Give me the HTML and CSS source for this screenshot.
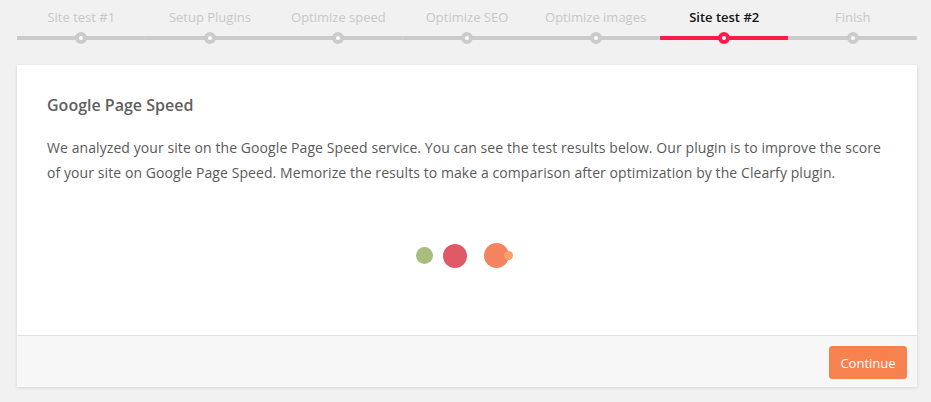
FILE: index.html
```html
<!DOCTYPE html>
<html>
<head>
<meta charset="utf-8">
<link rel="stylesheet" href="styles.css">
</head>
<body>
<div class="page">
  <ol class="steps">
    <li class="step"><span class="label">Site test #1</span><span class="track"><span class="dot"></span></span></li>
    <li class="step"><span class="label">Setup Plugins</span><span class="track"><span class="dot"></span></span></li>
    <li class="step"><span class="label">Optimize speed</span><span class="track"><span class="dot"></span></span></li>
    <li class="step"><span class="label">Optimize SEO</span><span class="track"><span class="dot"></span></span></li>
    <li class="step"><span class="label">Optimize images</span><span class="track"><span class="dot"></span></span></li>
    <li class="step active"><span class="label">Site test #2</span><span class="track"><span class="dot"></span></span></li>
    <li class="step"><span class="label">Finish</span><span class="track"><span class="dot"></span></span></li>
  </ol>
  <div class="card">
    <div class="card-body">
      <h2 class="title">Google Page Speed</h2>
      <p class="text">We analyzed your site on the Google Page Speed service. You can see the test results below. Our plugin is to improve the score of your site on Google Page Speed. Memorize the results to make a comparison after optimization by the Clearfy plugin.</p>
      <div class="loader">
        <span class="ball green"></span>
        <span class="ball red"></span>
        <span class="ball orange"><span class="tail"></span></span>
      </div>
    </div>
    <div class="card-footer">
      <button class="btn">Continue</button>
    </div>
  </div>
</div>
</body>
</html>
```
FILE: styles.css
```css
* { box-sizing: border-box; }
html, body { margin: 0; padding: 0; }
body {
  background: #f1f1f1;
  font-family: "Open Sans", "Segoe UI", sans-serif;
  width: 931px;
  height: 402px;
  overflow: hidden;
}
.page {
  padding: 0 14px 0 17px;
}
.steps {
  list-style: none;
  margin: 0;
  padding: 0;
  display: flex;
  width: 900px;
}
.step {
  flex: 1 1 0;
  display: flex;
  flex-direction: column;
  align-items: center;
}
.label {
  font-size: 13px;
  line-height: 18px;
  height: 18px;
  margin-top: 8px;
  color: #c8c8c8;
  white-space: nowrap;
}
.step.active .label {
  color: #111;
  font-weight: 600;
}
.track {
  margin-top: 6px;
  width: 100%;
  height: 12px;
  display: flex;
  align-items: center;
  justify-content: center;
  background: linear-gradient(#cbcbcb, #cbcbcb) center / 100% 4px no-repeat;
}
.dot {
  width: 12px;
  height: 12px;
  border-radius: 50%;
  border: 4px solid #cbcbcb;
  background: #fff;
}
.step.active .track {
  background-image: linear-gradient(#ff1b47, #ff1b47);
}
.step.active .dot {
  border-color: #ff1b47;
}
.card {
  margin-top: 21px;
  width: 900px;
  background: #fff;
  box-shadow: 0 1px 3px rgba(0,0,0,0.12);
}
.card-body {
  padding: 30px 30px 0 30px;
  height: 270px;
}
.title {
  margin: 0;
  font-size: 16px;
  font-weight: 600;
  line-height: 20px;
  color: #606060;
}
.text {
  margin: 20px 0 0;
  font-size: 14px;
  line-height: 25px;
  letter-spacing: 0.08px;
  color: #5a5a5a;
}
.loader {
  margin-top: 58px;
  display: flex;
  align-items: center;
  justify-content: center;
  height: 25px;
  padding-right: 9px;
}
.ball {
  display: block;
  border-radius: 50%;
}
.green {
  width: 17px; height: 17px;
  background: #a9bd7f;
  margin-right: 10px;
}
.red {
  width: 24px; height: 24px;
  background: #df5966;
  margin-right: 17px;
}
.orange {
  width: 25px; height: 25px;
  background: #f48360;
  position: relative;
}
.tail {
  position: absolute;
  right: -4px;
  top: 8px;
  width: 9px;
  height: 9px;
  border-radius: 50%;
  background: #f9a06b;
}
.card-footer {
  border-top: 1px solid #e3e3e3;
  background: #f7f7f7;
  height: 52px;
  display: flex;
  align-items: center;
  justify-content: flex-end;
  padding-right: 10px;
}
.btn {
  font-family: "Open Sans", "Segoe UI", sans-serif;
  font-size: 13px;
  color: #fff;
  background: #f88150;
  border: 1px solid #f3834f;
  border-radius: 3px;
  width: 78px;
  height: 33px;
  padding: 0;
  margin-top: 2px;
}
```
